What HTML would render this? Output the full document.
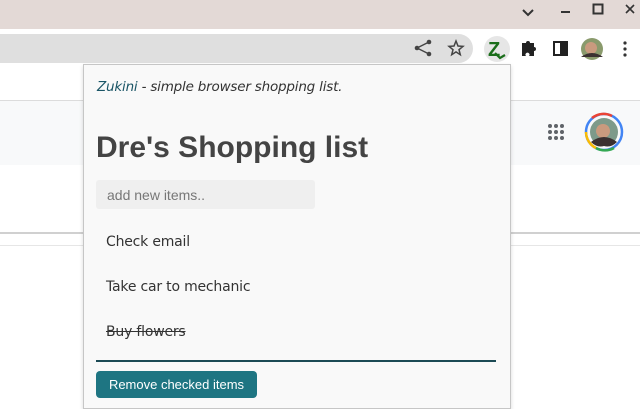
<!DOCTYPE html>
<html><head><meta charset="utf-8"><style>
*{margin:0;padding:0;box-sizing:border-box}
body{width:640px;height:400px;overflow:hidden;position:relative;background:#fff;font-family:"Liberation Sans",sans-serif}
.abs{position:absolute}
</style></head><body>
<div class="abs" style="left:0;top:0;width:640px;height:29px;background:#e3d9d6"></div>
<svg class="abs" style="left:0;top:0" width="640" height="29">
<path d="M523 10l5 5 5-5" stroke="#333" stroke-width="2" fill="none"/>
<path d="M561 12h9" stroke="#333" stroke-width="2"/>
<rect x="593.5" y="4.5" width="9" height="9" stroke="#333" stroke-width="2" fill="none"/>
<path d="M626 5l8 8M634 5l-8 8" stroke="#333" stroke-width="1.6"/>
</svg>
<div class="abs" style="left:0;top:29px;width:640px;height:35px;background:#fff"></div>
<div class="abs" style="left:-20px;top:34px;width:493px;height:29px;background:#dfdfdf;border-radius:15px"></div>
<svg class="abs" style="left:400px;top:29px" width="240" height="35">
<g fill="#444"><circle cx="17" cy="19" r="2.3"/><circle cx="29" cy="13" r="2.3"/><circle cx="29" cy="25" r="2.3"/></g>
<path d="M17 19L29 13M17 19L29 25" stroke="#444" stroke-width="1.4"/>
<path d="M56 12l2 5 5 .4-4 3.3 1.3 5-4.3-2.8-4.3 2.8 1.3-5-4-3.3 5-.4z" stroke="#444" stroke-width="1.5" fill="none"/>
<circle cx="97" cy="20" r="13" fill="#e6e6e6"/>
<text x="88" y="27" font-family="Liberation Sans" font-weight="bold" font-size="20" fill="#1b6e1b">Z</text>
<path d="M95 24l5 5 5-3" stroke="#1b6e1b" stroke-width="2.2" fill="none"/>
<path d="M122 14h4a2 2 0 1 1 4 0h4v4a2 2 0 1 1 0 4v5h-5a2 2 0 1 0-3 0h-4z" fill="#222"/>
<rect x="154" y="13" width="13" height="13" stroke="#222" stroke-width="2" fill="none"/><rect x="160" y="13" width="7" height="13" fill="#222"/>
<circle cx="192" cy="20" r="11" fill="#8a9a6c"/><circle cx="191" cy="19" r="6" fill="#c99a7e"/><path d="M181 28q11-8 22 0" fill="#3a3030"/>
<g fill="#333"><circle cx="225" cy="14" r="1.6"/><circle cx="225" cy="20" r="1.6"/><circle cx="225" cy="26" r="1.6"/></g>
</svg>
<div class="abs" style="left:0;top:100px;width:640px;height:1px;background:#dcdcdc"></div>
<div class="abs" style="left:0;top:101px;width:640px;height:64px;background:#f8f9fa"></div>
<div class="abs" style="left:0;top:232px;width:640px;height:2px;background:#d0d0d0"></div>
<div class="abs" style="left:0;top:245px;width:640px;height:1px;background:#e6e6e6"></div>
<svg class="abs" style="left:540px;top:110px" width="100" height="46">
<g fill="#5f6368"><circle cx="10" cy="16" r="2"/><circle cx="16" cy="16" r="2"/><circle cx="22" cy="16" r="2"/><circle cx="10" cy="22" r="2"/><circle cx="16" cy="22" r="2"/><circle cx="22" cy="22" r="2"/><circle cx="10" cy="28" r="2"/><circle cx="16" cy="28" r="2"/><circle cx="22" cy="28" r="2"/></g>
<circle cx="64" cy="22" r="18" fill="none" stroke="#4285f4" stroke-width="2.5"/>
<path d="M46 22a18 18 0 0 0 10 16" stroke="#fbbc05" stroke-width="2.5" fill="none"/>
<path d="M56 38a18 18 0 0 0 18 0" stroke="#34a853" stroke-width="2.5" fill="none"/>
<path d="M52 8a18 18 0 0 1 20-2" stroke="#ea4335" stroke-width="2.5" fill="none"/>
<circle cx="64" cy="22" r="14" fill="#7d9a8a"/><circle cx="63" cy="21" r="7" fill="#c99a7e"/><path d="M51 32q13-10 26 0q-6 6-13 4q-7 2-13-4" fill="#3a3030"/>
</svg>
<div class="abs" style="left:83px;top:64px;width:428px;height:345px;background:#f9f9f9;border:1px solid #c6c6c6;box-shadow:0 2px 4px rgba(0,0,0,.15)"></div>
<div class="abs" style="left:97px;top:79px;font-family:'DejaVu Sans',sans-serif;font-style:italic;font-size:13.5px;color:#333;letter-spacing:-0.2px"><span style="color:#1a5566">Zukini</span> - simple browser shopping list.</div>
<div class="abs" style="left:96px;top:131px;font-weight:bold;font-size:30px;color:#444">Dre's Shopping list</div>
<div class="abs" style="left:96px;top:180px;width:219px;height:29px;background:#efefef;border-radius:3px;font-size:14px;color:#777;padding:7px 0 0 11px">add new items..</div>
<div class="abs" style="left:106px;top:234px;font-family:'DejaVu Sans',sans-serif;font-size:14px;color:#333;letter-spacing:-0.2px">Check email</div>
<div class="abs" style="left:106px;top:279px;font-family:'DejaVu Sans',sans-serif;font-size:14px;color:#333;letter-spacing:-0.2px">Take car to mechanic</div>
<div class="abs" style="left:106px;top:324px;font-family:'DejaVu Sans',sans-serif;font-size:14px;color:#333;letter-spacing:-0.2px;text-decoration:line-through">Buy flowers</div>
<div class="abs" style="left:96px;top:360px;width:400px;height:2px;background:#1c4a55"></div>
<div class="abs" style="left:96px;top:371px;width:161px;height:27px;background:#1e7582;border-radius:4px;color:#fff;font-size:13px;padding-top:6px;text-align:center">Remove checked items</div>
</body></html>
